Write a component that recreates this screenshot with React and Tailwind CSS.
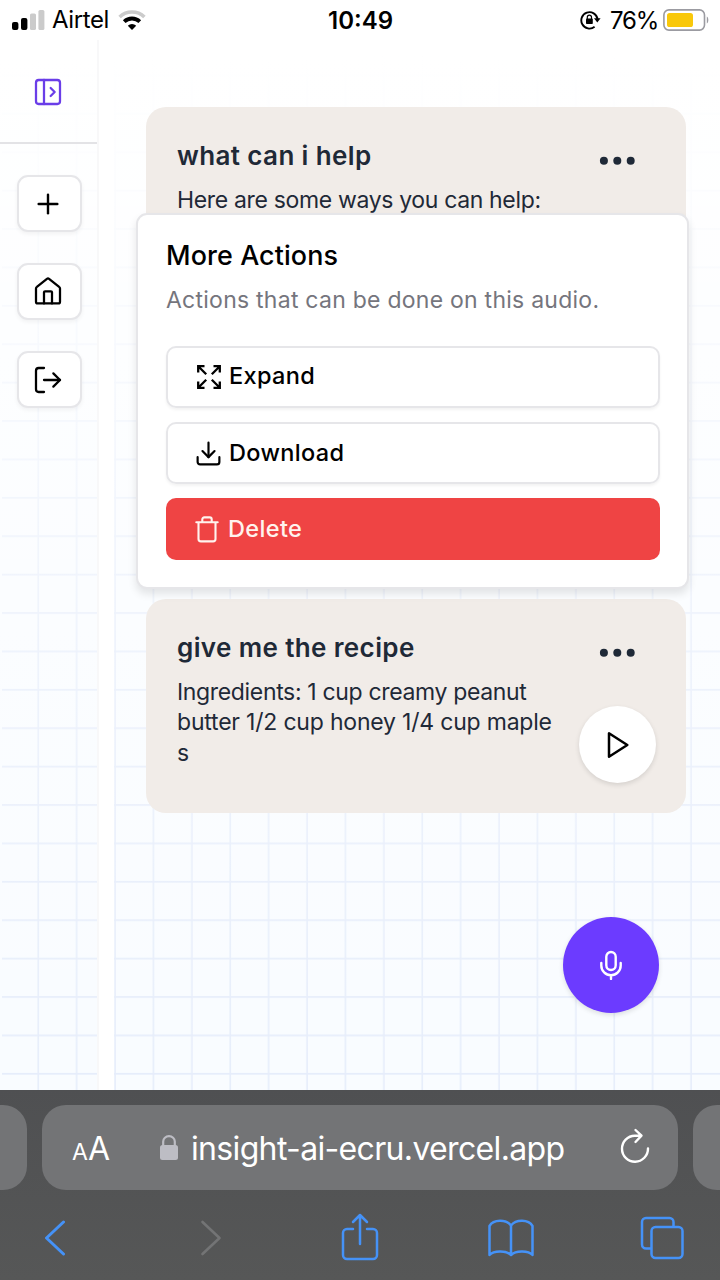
import { PanelLeftOpen, Plus, LogOut, Download } from "lucide-react";

function StatusBar() {
  return (
    <header className="flex h-10 shrink-0 items-center justify-between pl-3 pr-[11px] text-[24px] leading-none text-black">
      <div className="flex w-[240px] items-center">
        <svg width="33" height="20" viewBox="0 0 33 20">
          <rect x="0" y="12" width="6.4" height="8" rx="2" fill="#000" />
          <rect x="9" y="8" width="6.4" height="12" rx="2" fill="#000" />
          <rect x="18" y="3.5" width="6" height="16.5" rx="1.6" fill="#cbcbcb" />
          <rect x="26.4" y="0" width="6" height="20" rx="1.6" fill="#cbcbcb" />
        </svg>
        <span className="ml-[7px] tracking-[-0.4px]">Airtel</span>
        <svg className="ml-2" width="30" height="22" viewBox="0 0 30 22">
          <path d="M2.600 8A18 18 0 0 1 27.400 8" fill="none" stroke="#cbcbcb" strokeWidth="3.600" />
          <path d="M7.200 12.600A11.400 11.400 0 0 1 22.800 12.600" fill="none" stroke="#000" strokeWidth="3.800" />
          <path d="M15 21l-4.200-4.300a6 6 0 0 1 8.400 0z" fill="#000" />
        </svg>
      </div>
      <span className="pt-px font-semibold">10:49</span>
      <div className="flex w-[240px] items-center justify-end">
        <svg width="21" height="20" viewBox="0 0 21 20">
          <path d="M14.600 16.800A8.200 8.200 0 1 1 17.600 9" fill="none" stroke="#000" strokeWidth="1.900" />
          <path d="M14 8.200h6.600l-3.300 4.400z" fill="#000" />
          <rect x="6" y="8.600" width="6.800" height="5.400" rx="0.800" fill="#000" />
          <path d="M7.300 9V7.200a2.100 2.100 0 0 1 4.200 0V9" fill="none" stroke="#000" strokeWidth="1.200" />
        </svg>
        <span className="ml-[9px] mr-[5px] pt-px tracking-[-1.2px]">76%</span>
        <svg className="-mt-px" width="46" height="22" viewBox="0 0 46 22">
          <rect x="0.900" y="0.900" width="40.600" height="20.200" rx="5" fill="none" stroke="#9b9ba1" strokeWidth="1.600" />
          <rect x="4" y="4" width="26" height="14" rx="2.600" fill="#f9c80a" />
          <path d="M43.800 7.500c2 .8 2 6.200 0 7z" fill="#9b9ba1" />
        </svg>
      </div>
    </header>
  );
}

function HomeIcon() {
  return (
    <svg className="mb-[2px]" width="32" height="32" viewBox="0 0 24 24" fill="none" stroke="currentColor" strokeWidth="1.700" strokeLinecap="round" strokeLinejoin="round">
      <path d="M3 10.200a1.600 1.600 0 0 1 .65-1.300L11.200 2.900a1.300 1.300 0 0 1 1.600 0l7.550 6a1.600 1.600 0 0 1 .65 1.300V20a1.300 1.300 0 0 1-1.300 1.300H4.300A1.300 1.300 0 0 1 3 20z" />
      <path d="M9 21.300V13a.8.8 0 0 1 .8-.8h4.400a.8.8 0 0 1 .8.800v8.300" />
    </svg>
  );
}

function ExpandIcon() {
  return (
    <svg width="24" height="24" viewBox="0 0 24 24" fill="none" stroke="currentColor" strokeWidth="2.300" strokeLinejoin="miter">
      <path d="M1.200 7.500V1.200H7.500M1.200 1.200l8 8M16.500 1.200h6.300V7.500M22.800 1.200l-8 8M1.200 16.500v6.300H7.500M1.200 22.800l8-8M16.500 22.800h6.300V16.500M22.800 22.800l-8-8" />
    </svg>
  );
}

function TrashIcon() {
  return (
    <svg width="24" height="27" viewBox="0 0 24 27" fill="none" stroke="currentColor" strokeWidth="2.100" strokeLinecap="round" strokeLinejoin="round">
      <path d="M1.300 6.200h21.400M3.500 6.200V23a2.400 2.400 0 0 0 2.400 2.400h12.200a2.400 2.400 0 0 0 2.400-2.400V6.200M7.300 6V3.400a2 2 0 0 1 2-2h5.400a2 2 0 0 1 2 2V6" />
    </svg>
  );
}

function SideButton({ children }) {
  return (
    <button className="flex h-[57px] w-[65px] items-center justify-center rounded-[11px] border-2 border-[#e6e6e9] bg-white pr-[2px] text-black shadow-[0_2px_4px_rgba(0,0,0,0.05)]">
      {children}
    </button>
  );
}

function Sidebar() {
  return (
    <aside className="flex w-[99px] shrink-0 flex-col border-r-2 border-[#f8f8f9]">
      <div className="flex h-[104px] items-center justify-center border-b-2 border-[#e3e3e6] pr-px pt-[2px] text-[#6a3de8]">
        <PanelLeftOpen size={32} strokeWidth={1.7} />
      </div>
      <nav className="flex flex-col items-center gap-[31px] pl-px pt-[31px]">
        <SideButton><Plus size={32} strokeWidth={1.8} /></SideButton>
        <SideButton><HomeIcon /></SideButton>
        <SideButton><LogOut size={32} strokeWidth={1.7} /></SideButton>
      </nav>
    </aside>
  );
}

function Dots() {
  return (
    <svg width="36" height="9" viewBox="0 0 36 9" fill="#1f2937">
      <circle cx="4.900" cy="4.700" r="4" />
      <circle cx="18.300" cy="4.700" r="4" />
      <circle cx="31.700" cy="4.700" r="4" />
    </svg>
  );
}

function NoteCard({ title, children, action }) {
  return (
    <article className="flex h-[214px] justify-between rounded-[20px] bg-[#f1ece8] pl-[31px] pr-[30px] pt-[30px] text-[#1f2937]">
      <div>
        <h2 className="text-[26px] font-semibold leading-[38px] tracking-[0.38px]">{title}</h2>
        <p className="mt-[9.5px] whitespace-nowrap text-[23px] leading-[30.7px] tracking-[-0.2px] first-line:tracking-[-0.34px]">{children}</p>
      </div>
      <div className="flex w-[78px] shrink-0 flex-col items-center pt-[19px]">
        <Dots />
        {action}
      </div>
    </article>
  );
}

function ActionsPopover() {
  return (
    <section className="absolute left-[136px] top-[213px] flex h-[376px] w-[553px] flex-col rounded-[11px] border-2 border-[#e6e6e9] bg-white pl-7 pr-[27px] pt-[25px] text-black shadow-[0_5px_9px_rgba(0,0,0,0.1)]">
      <h3 className="text-[26.900px] font-medium leading-[30px] tracking-[0.1px]">More Actions</h3>
      <p className="mt-[15px] whitespace-nowrap text-[23px] leading-[31px] tracking-[0.25px] text-[#75757d]">Actions that can be done on this audio.</p>
      <div className="mt-[30px] flex flex-col gap-[14px] text-[23.500px] font-medium tracking-[0.35px]">
        <button className="flex h-[62px] items-center rounded-[10px] border-2 border-[#e6e6e9] pl-[29px] shadow-[0_2px_3px_rgba(0,0,0,0.05)]">
          <ExpandIcon />
          <span className="ml-2 pb-[2px]">Expand</span>
        </button>
        <button className="flex h-[62px] items-center rounded-[10px] border-2 border-[#e6e6e9] pl-[26px] shadow-[0_2px_3px_rgba(0,0,0,0.05)]">
          <Download size={29} strokeWidth={1.8} />
          <span className="ml-[6px]">Download</span>
        </button>
        <button className="flex h-[62px] items-center rounded-[10px] bg-[#ef4444] pl-[29px] text-[#fff3ee]">
          <TrashIcon />
          <span className="ml-[9px] pb-px">Delete</span>
        </button>
      </div>
    </section>
  );
}

function BrowserBar() {
  return (
    <footer className="flex h-[190px] shrink-0 flex-col bg-linear-to-b from-[#4f5052] to-[#565757] pt-[15px]">
      <div className="flex h-[85px] justify-between">
        <div className="w-[27px] rounded-r-[24px] bg-[#737476]" />
        <div className="flex w-[636px] items-center rounded-[24px] bg-[#737476] pl-[30px] pr-[27px] text-white">
          <span className="flex w-[88px] items-baseline pt-[2px] leading-none"><span className="text-[23px]">A</span><span className="text-[32px]">A</span></span>
          <svg width="18" height="25" viewBox="0 0 18 25">
            <rect x="0" y="10" width="18" height="15" rx="2.500" fill="#bdbdc4" />
            <path d="M3.200 11V6.500a5.800 5.300 0 0 1 11.600 0V11" fill="none" stroke="#bdbdc4" strokeWidth="2.200" />
          </svg>
          <span className="ml-[13px] pt-[2px] text-[32px] leading-none tracking-[-0.66px]">insight-ai-ecru.vercel.app</span>
          <svg className="mb-1 ml-auto" width="32" height="36" viewBox="0 0 32 36" fill="none" stroke="currentColor" strokeWidth="2.400" strokeLinecap="round" strokeLinejoin="round">
            <path d="M20.500 7.700H15.800A13 13 0 1 0 29 20.500M16.500 2l6 5.700-6 6.300" />
          </svg>
        </div>
        <div className="w-[27px] rounded-l-[24px] bg-[#737476]" />
      </div>
      <div className="flex h-[90px] items-center pb-[1px] pl-[44px] pt-[6px] text-[#4592f7]">
        <svg width="22" height="36" viewBox="0 0 22 36" fill="none" stroke="currentColor" strokeWidth="3" strokeLinecap="round" strokeLinejoin="round"><path d="M19.500 2L2.500 18l17 16" /></svg>
        <svg className="ml-[134px]" width="22" height="36" viewBox="0 0 22 36" fill="none" stroke="#737475" strokeWidth="2.600" strokeLinecap="round" strokeLinejoin="round"><path d="M2.500 2l17 16-17 16" /></svg>
        <svg className="-mt-[2px] ml-[119px]" width="38" height="48" viewBox="0 0 38 48" fill="none" stroke="currentColor" strokeWidth="2.500" strokeLinecap="round" strokeLinejoin="round"><path d="M12 16H6a4 4 0 0 0-4 4v22a4 4 0 0 0 4 4h26a4 4 0 0 0 4-4V20a4 4 0 0 0-4-4h-6M19 31V2M12 9l7-7 7 7" /></svg>
        <svg className="ml-[109px]" width="46" height="38" viewBox="0 0 46 38" fill="none" stroke="currentColor" strokeWidth="2.500" strokeLinejoin="round"><path d="M23 6.500C18 .2 5.500.2 1.500 7v29c4-4.500 16.500-5 21.500 0 5-5 17.500-4.500 21.500 0V7C40.500.2 28 .2 23 6.500zM23 6.500V36" /></svg>
        <svg className="ml-[106px]" width="44" height="44" viewBox="0 0 44 44" fill="none" stroke="currentColor" strokeWidth="2.500" strokeLinejoin="round"><rect x="11.500" y="11" width="31" height="31" rx="4" /><path d="M11.500 32.500H6a4 4 0 0 1-4-4V6a4 4 0 0 1 4-4h23.500a4 4 0 0 1 4 4v5" /></svg>
      </div>
    </footer>
  );
}

export default function App() {
  return (
    <div className="relative flex h-[1280px] w-[720px] flex-col overflow-hidden bg-white font-['Inter','Liberation_Sans',sans-serif]">
      <svg className="absolute left-0 top-0" width="720" height="1090" viewBox="0 0 720 1090">
        <defs>
          <pattern id="grid" width="38.400" height="38.400" x="0.700" y="-2.300" patternUnits="userSpaceOnUse">
            <path d="M0 .8H38.400M37.600 0V38.400" stroke="#e6edfb" strokeWidth="1.600" />
          </pattern>
          <linearGradient id="fade" x1="0" y1="0" x2="0" y2="1">
            <stop offset="0.050" stopColor="#fff" stopOpacity="1" />
            <stop offset="0.300" stopColor="#fff" stopOpacity="0.700" />
            <stop offset="0.600" stopColor="#fff" stopOpacity="0.300" />
            <stop offset="1" stopColor="#fff" stopOpacity="0" />
          </linearGradient>
        </defs>
        <rect width="720" height="1090" fill="#f9fcff" />
        <rect x="2" width="96" height="1090" fill="url(#grid)" />
        <rect x="98" width="16" height="1090" fill="#fff" />
        <rect x="114" width="606" height="1090" fill="url(#grid)" />
        <rect width="720" height="1090" fill="url(#fade)" />
      </svg>
      <div className="relative flex h-[1090px] flex-col">
        <StatusBar />
        <div className="flex flex-1">
          <Sidebar />
          <main className="flex flex-1 flex-col pl-[47px] pr-[34px] pt-[67px]">
            <div className="flex flex-col gap-[278px]">
              <NoteCard title="what can i help">Here are some ways you can help:</NoteCard>
              <NoteCard
                title="give me the recipe"
                action={
                  <button className="ml-px mt-[49px] flex size-[77px] shrink-0 items-center justify-center rounded-full bg-white pl-px text-black shadow-[0_2px_5px_rgba(0,0,0,0.12)]">
                    <svg width="22" height="28" viewBox="0 0 22 28" fill="none" stroke="currentColor" strokeWidth="2.500" strokeLinejoin="round"><path d="M2 2.300v23.400L20.300 14z" /></svg>
                  </button>
                }
              >
                Ingredients: 1 cup creamy peanut<br />butter 1/2 cup honey 1/4 cup maple<br />s
              </NoteCard>
            </div>
            <button className="mr-[27px] mt-[104px] flex size-24 items-center justify-center self-end rounded-full bg-[#6c3bff] text-white shadow-[0_2px_5px_rgba(0,0,0,0.12)]">
              <svg width="24" height="30" viewBox="0 0 24 30" fill="none" stroke="currentColor" strokeWidth="2.400" strokeLinecap="round"><rect x="7.300" y="2" width="9.400" height="18" rx="4.700" /><path d="M2.300 13v2.600a9.700 9.700 0 0 0 19.400 0V13M12 25.500V29" /></svg>
            </button>
          </main>
        </div>
        <ActionsPopover />
      </div>
      <BrowserBar />
    </div>
  );
}
